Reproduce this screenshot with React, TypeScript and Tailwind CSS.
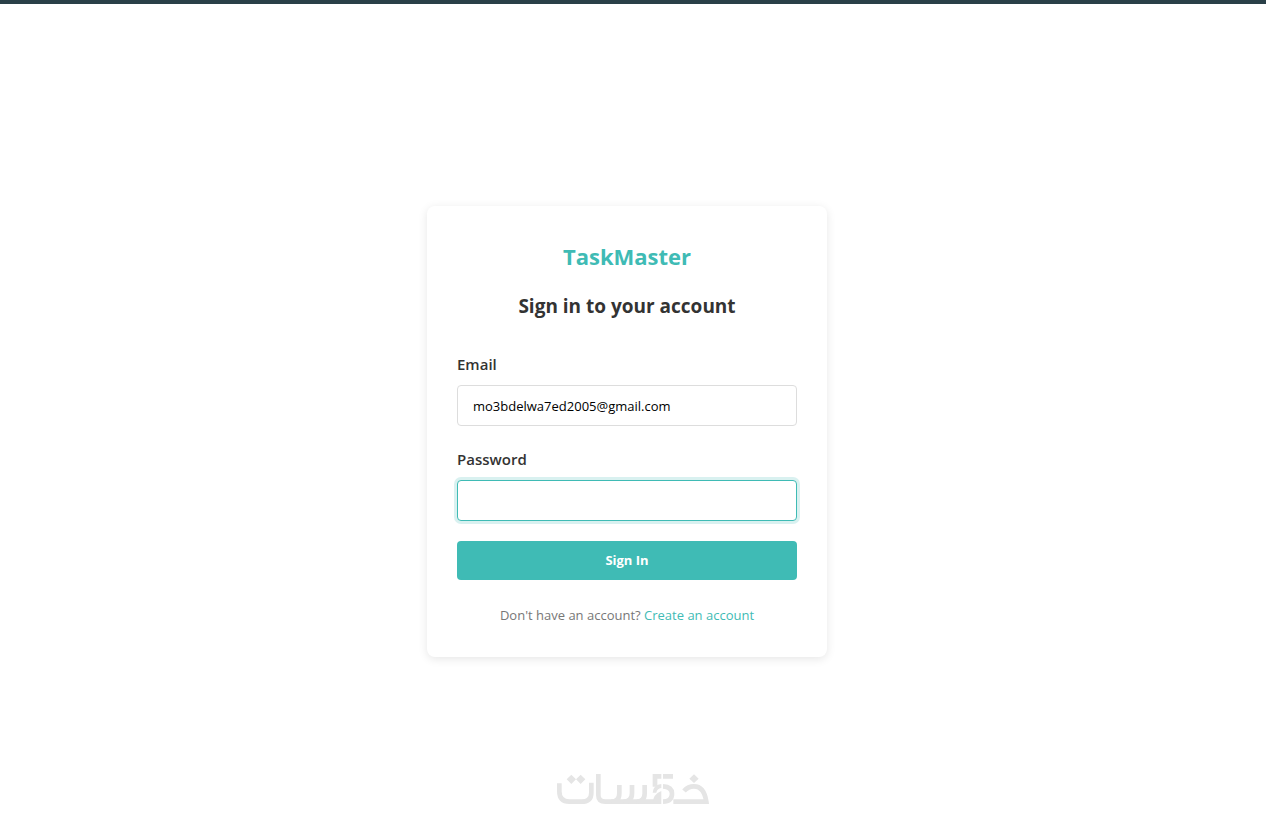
import { useState } from 'react';
import type { FormEvent, JSX } from 'react';

const FIELD_CLASS =
  'h-[41px] w-full rounded border border-[#dddddd] bg-white px-[15px] text-[13px] text-black outline-none focus:border-[#3fbbb5] focus:ring-3 focus:ring-[#3fbbb5]/20';

const LABEL_CLASS = 'mb-2 block text-[15px] leading-[26px] font-semibold text-[#333333]';

function KhamsatLogo(): JSX.Element {
  return (
    <svg
      viewBox="51 42 456 90"
      className="h-[30px] w-[152px]"
      fill="none"
      stroke="#e5e5e5"
      strokeWidth="14"
      role="img"
      aria-label="Khamsat"
    >
      <path d="M58 70V94Q58 125 88 125H124Q154 125 154 98V68" />
      <path d="M94 44l14 14-14 14-14-14zM122 44l14 14-14 14-14-14z" fill="#e5e5e5" stroke="none" />
      <path d="M175 42V106Q175 125 196 125H362" />
      <path d="M214 125Q238 125 238 100V75M250 125Q276 125 276 100V75M290 125Q314 125 314 100V75" />
      {/* five */}
      <path d="M364 49H345V80M369 49H399" />
      <path d="M338 98Q340 74 364 72V84Q351 86 349 98z" fill="#e5e5e5" stroke="none" />
      <path d="M338 132Q338 102 364 93V132z" fill="#e5e5e5" stroke="none" />
      <path d="M369 79Q396 80 396 101Q396 124 369 125" />
      {/* kha */}
      <path d="M462 43l14 13-14 13-14-13z" fill="#e5e5e5" stroke="none" />
      <path d="M432 93Q444 79 462 79Q492 79 499 125H400" />
    </svg>
  );
}

export default function App(): JSX.Element {
  const [email, setEmail] = useState('mo3bdelwa7ed2005@gmail.com');
  const [password, setPassword] = useState('');

  const handleSubmit = (e: FormEvent): void => {
    e.preventDefault();
  };

  return (
    <div className="flex min-h-screen flex-col border-t-4 border-[#2a4048] bg-white pr-3 font-['Segoe_UI','Open_Sans',sans-serif]">
      <main className="flex flex-1 flex-col items-center justify-end px-4">
        <section className="w-full max-w-[400px] rounded-lg bg-white p-[30px] shadow-[0_2px_10px_rgba(0,0,0,0.1)]">
          <h1 className="text-center text-[22px] leading-10 font-bold text-[#3fbbb5]">TaskMaster</h1>
          <h2 className="mt-3.5 mb-[29px] text-center text-[19px] leading-8 font-bold text-[#333333]">
            Sign in to your account
          </h2>

          <form onSubmit={handleSubmit}>
            <div className="mb-5">
              <label htmlFor="email" className={LABEL_CLASS}>
                Email
              </label>
              <input
                id="email"
                type="email"
                value={email}
                onChange={e => {
                  setEmail(e.target.value);
                }}
                className={FIELD_CLASS}
              />
            </div>
            <div className="mb-5">
              <label htmlFor="password" className={LABEL_CLASS}>
                Password
              </label>
              <input
                id="password"
                type="password"
                autoFocus
                value={password}
                onChange={e => {
                  setPassword(e.target.value);
                }}
                className={`${FIELD_CLASS} caret-transparent`}
              />
            </div>
            <button
              type="submit"
              className="h-[39px] w-full rounded bg-[#3fbbb5] text-[13px] font-bold text-white hover:bg-[#36a39e]"
            >
              Sign In
            </button>
          </form>

          <p className="mt-6 text-center text-[13px] leading-[23px] text-[#777777]">
            Don't have an account?{' '}
            <a href="#register" className="text-[#3fbbb5] hover:underline">
              Create an account
            </a>
          </p>
        </section>
      </main>
      <footer className="flex h-[164px] items-end justify-center pb-[17px] pl-3">
        <KhamsatLogo />
      </footer>
    </div>
  );
}
